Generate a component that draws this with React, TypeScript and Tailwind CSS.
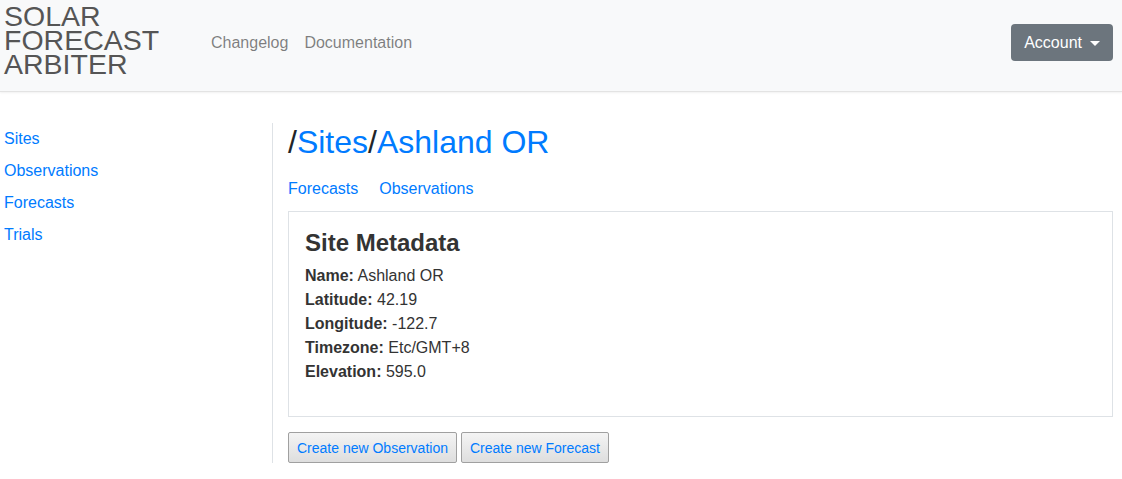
import React from 'react';

const font = { fontFamily: '"Liberation Sans", Arial, sans-serif' };

const meta: [string, string][] = [
  ['Name:', 'Ashland OR'],
  ['Latitude:', '42.19'],
  ['Longitude:', '-122.7'],
  ['Timezone:', 'Etc/GMT+8'],
  ['Elevation:', '595.0'],
];

export default function App() {
  return (
    <div className="min-h-[479px] bg-white text-[#212529]" style={font}>
      <header className="flex h-[92px] items-center border-b border-[#e3e3e3] bg-[#f8f9fa] pb-[6px] pr-[9px] shadow-[0_1px_2px_rgba(0,0,0,0.06)]">
        <div className="-mt-[5px] w-[211px] pl-[4px] text-[28.5px] uppercase leading-[24px] text-[#555]">
          <div>Solar</div>
          <div>Forecast</div>
          <div>Arbiter</div>
        </div>
        <nav className="flex gap-4 text-base text-[rgba(0,0,0,0.5)]">
          <a>Changelog</a>
          <a>Documentation</a>
        </nav>
        <button className="ml-auto flex h-[37px] items-center gap-[8px] rounded-[4px] bg-[#6c757d] px-[13px] text-base text-white">
          Account
          <span className="mt-[1px] border-x-[5px] border-t-[5px] border-x-transparent border-t-white" />
        </button>
      </header>

      <div className="flex pt-[31px]">
        <aside className="flex w-[272px] shrink-0 flex-col gap-[8px] pl-[4px] text-base leading-[24px] text-[#007bff]">
          <a className="mt-[4px]">Sites</a>
          <a>Observations</a>
          <a>Forecasts</a>
          <a>Trials</a>
        </aside>
        <main className="flex-1 border-l border-[#dee2e6] pl-[15px] pr-[9px]">
          <h1 className="text-[32px] leading-[38px]">
            /<a className="text-[#007bff]">Sites</a>/<a className="text-[#007bff]">Ashland OR</a>
          </h1>
          <div className="mt-[16px] flex gap-[21px] text-base leading-[24px] text-[#007bff]">
            <a>Forecasts</a>
            <a>Observations</a>
          </div>
          <section className="mt-[10px] h-[206px] border border-[#dee2e6] px-[16px] pt-[16px] text-[#333]">
            <h2 className="text-[24px] font-bold leading-[29px]">Site Metadata</h2>
            <div className="mt-[7px] text-base leading-[24px]">
              {meta.map(([k, v]) => (
                <div key={k}>
                  <b>{k}</b> {v}
                </div>
              ))}
            </div>
          </section>
          <div className="mt-[15px] flex gap-[4px]">
            <button className="h-[31px] rounded-[2px] border border-[#a0a0a0] bg-gradient-to-b from-[#f4f4f4] to-[#dedede] px-[8px] text-sm text-[#007bff]">
              Create new Observation
            </button>
            <button className="h-[31px] rounded-[2px] border border-[#a0a0a0] bg-gradient-to-b from-[#f4f4f4] to-[#dedede] px-[8px] text-sm text-[#007bff]">
              Create new Forecast
            </button>
          </div>
        </main>
      </div>
    </div>
  );
}
